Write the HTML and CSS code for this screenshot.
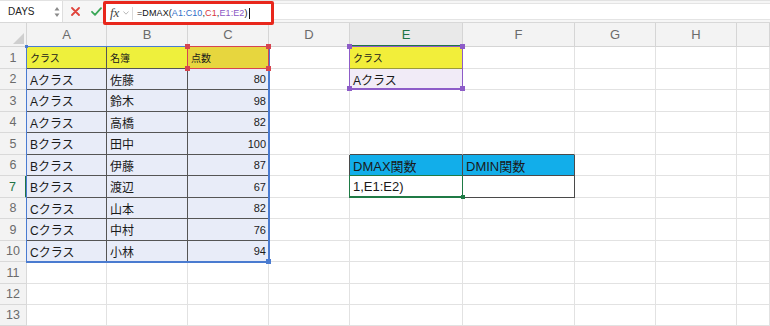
FILE: index.html
```html
<!DOCTYPE html>
<html lang="ja">
<head>
    <meta charset="UTF-8">
    <title>DMAX</title>
    <link rel="stylesheet" href="styles.css">
</head>
<body>
    <div class="toolbar">
        <div class="namebox">
            <span class="namebox-text">DAYS</span>
            <svg class="spin" width="6" height="12" viewBox="0 0 6 12">
                <path d="M3 1 L5.5 4.5 L0.5 4.5 Z" fill="#8a8a8a"/>
                <path d="M3 11 L5.5 7.5 L0.5 7.5 Z" fill="#8a8a8a"/>
            </svg>
        </div>
        <div class="tb-icons">
            <svg class="cancel" width="9" height="9" viewBox="0 0 9 9">
                <path d="M1 1 L8 8 M8 1 L1 8" stroke="#e0443c" stroke-width="1.8" stroke-linecap="round"/>
            </svg>
            <svg class="ok" width="11" height="9" viewBox="0 0 11 9">
                <path d="M1 4.8 L4 7.8 L10 1.2" stroke="#3aa757" stroke-width="1.8" fill="none" stroke-linecap="round" stroke-linejoin="round"/>
            </svg>
        </div>
        <div class="fx-box">
            <span class="fx">fx</span>
            <svg class="fx-caret" width="6" height="4" viewBox="0 0 6 4">
                <path d="M0.5 0.5 L3 3.2 L5.5 0.5" stroke="#b0b0b0" stroke-width="0.9" fill="none"/>
            </svg>
            <span class="fx-divider"></span>
            <div class="formula">=DMAX(<span class="ref-a">A1:C10</span>,<span class="ref-c">C1</span>,<span class="ref-e">E1:E2</span>)<span class="cursor"></span></div>
        </div>
        <div class="formula-rest"></div>
    </div>

    <div class="sheet-wrap">
        <div class="sheet" id="sheet"></div>
        <div class="sheet overlay">
            <div class="hl hl-blue"><span class="h h-tl"></span><span class="h h-br"></span></div>
            <div class="hl hl-red"><span class="h h-tl"></span><span class="h h-tr"></span><span class="h h-bl"></span><span class="h h-br"></span></div>
            <div class="hl hl-purple"><span class="h h-tl"></span><span class="h h-tr"></span><span class="h h-bl"></span><span class="h h-br"></span></div>
            <div class="hl hl-green"><span class="h h-br"></span></div>
        </div>
    </div>

    <script>
    // sheet contents
    const cols = ['A','B','C','D','E','F','G','H',''];
    const data = {
        1: {A:'クラス', B:'名簿', C:'点数', E:'クラス'},
        2: {A:'Aクラス', B:'佐藤', C:80, E:'Aクラス'},
        3: {A:'Aクラス', B:'鈴木', C:98},
        4: {A:'Aクラス', B:'高橋', C:82},
        5: {A:'Bクラス', B:'田中', C:100},
        6: {A:'Bクラス', B:'伊藤', C:87, E:'DMAX関数', F:'DMIN関数'},
        7: {A:'Bクラス', B:'渡辺', C:67, E:'1,E1:E2)'},
        8: {A:'Cクラス', B:'山本', C:82},
        9: {A:'Cクラス', B:'中村', C:76},
        10: {A:'Cクラス', B:'小林', C:94}
    };
    const activeRow = 7, activeCol = 'E';

    function cellClass(r, c) {
        const cls = ['cell'];
        const inTable = r <= 10 && c && 'ABC'.includes(c);
        if (inTable) {
            cls.push('tbl-line');
            if (r === 1) cls.push(c === 'C' ? 'yel-sel' : 'yel', 'small');
            else cls.push('tbl');
            if (c === 'C' && r > 1) cls.push('num');
        }
        if (c === 'E' && r === 1) cls.push('yel-e', 'small');
        if (c === 'E' && r === 2) cls.push('lav');
        if ((c === 'E' || c === 'F') && r === 6) cls.push('cyan', 'box', 'large');
        if ((c === 'E' || c === 'F') && r === 7) cls.push('box', 'large');
        if (c === 'D' && (r === 6 || r === 7)) cls.push('r-dark');
        if ((c === 'E' || c === 'F') && r === 5) cls.push('b-dark');
        return cls.join(' ');
    }

    const sheet = document.getElementById('sheet');
    const corner = document.createElement('div');
    corner.className = 'cell corner';
    sheet.appendChild(corner);
    cols.forEach(c => {
        const h = document.createElement('div');
        h.className = 'cell col-head' + (c === activeCol ? ' active' : '');
        h.textContent = c;
        sheet.appendChild(h);
    });
    for (let r = 1; r <= 13; r++) {
        const rh = document.createElement('div');
        rh.className = 'cell row-head' + (r === activeRow ? ' active' : '');
        rh.textContent = r;
        sheet.appendChild(rh);
        cols.forEach(c => {
            const cell = document.createElement('div');
            cell.className = cellClass(r, c);
            const v = data[r] && data[r][c];
            if (v !== undefined) cell.textContent = v;
            sheet.appendChild(cell);
        });
    }
    </script>
</body>
</html>
```

FILE: styles.css
```css
body {
    margin: 0;
    width: 770px;
    height: 326px;
    overflow: hidden;
    background: #fff;
    font-family: "Liberation Sans", "Noto Sans CJK JP", sans-serif;
    color: #1a1a1a;
}
.toolbar {
    display: flex;
    align-items: center;
    height: 23px;
    box-sizing: border-box;
    background: #f6f6f6;
    border-top: 1px solid #e2e2e2;
    border-bottom: 1px solid #d8d8d8;
    position: relative;
    z-index: 3;
}
.namebox {
    width: 63px;
    height: 100%;
    box-sizing: border-box;
    background: #fff;
    border-right: 1px solid #dedede;
    display: flex;
    align-items: center;
    padding-left: 8px;
    font-size: 10px;
    color: #222;
}
.spin {
    margin-left: auto;
    margin-right: 2px;
}
.tb-icons {
    width: 40px;
    display: flex;
    align-items: center;
    padding-left: 8px;
    gap: 11px;
    box-sizing: border-box;
}
.fx-box {
    width: 171px;
    height: 24px;
    align-self: flex-start;
    box-sizing: border-box;
    border: 3px solid #e8271c;
    border-radius: 2px;
    background: #fff;
    display: flex;
    align-items: center;
    padding-left: 4px;
}
.fx {
    font-family: "Liberation Serif", serif;
    font-style: italic;
    font-size: 13px;
    color: #444;
    width: 13px;
}
.fx-divider {
    width: 1px;
    height: 13px;
    background: #dadada;
    margin: 0 4px 0 3px;
}
.formula {
    font-size: 9px;
    color: #111;
    display: flex;
    align-items: center;
    letter-spacing: 0.1px;
}
.ref-a { color: #2f6fc9; }
.ref-c { color: #d9363e; }
.ref-e { color: #8b57c4; }
.cursor {
    width: 1px;
    height: 11px;
    background: #111;
    margin-left: 1px;
}
.formula-rest {
    flex: 1;
    height: 15px;
    background: #fff;
    border-top: 1px solid #e4e4e4;
    border-bottom: 1px solid #e4e4e4;
}

.sheet-wrap {
    position: relative;
}
.sheet {
    display: grid;
    grid-template-columns: 27px 80px 81px 81px 81px 113px 112px 81px 81px 1fr;
    grid-template-rows: 24px 22px 21px 22px 21px 22px 21px 22px 21px 22px 21px 22px 21px 21px;
}
.overlay {
    position: absolute;
    top: 0;
    left: 0;
    right: 0;
    pointer-events: none;
}
.cell {
    box-sizing: border-box;
    border-right: 1px solid #e2e2e2;
    border-bottom: 1px solid #e2e2e2;
    display: flex;
    align-items: center;
    padding: 0 3px;
    font-size: 12px;
    white-space: nowrap;
    overflow: hidden;
}
.corner {
    background: #f3f3f3;
    border-color: #d5d5d5;
    position: relative;
}
.corner::after {
    content: "";
    position: absolute;
    right: 2px;
    bottom: 2px;
    width: 11px;
    height: 11px;
    background: #cfcfcf;
    clip-path: polygon(100% 0, 100% 100%, 0 100%);
}
.col-head {
    background: #f3f3f3;
    border-color: #d5d5d5;
    justify-content: center;
    color: #6b6b6b;
    font-size: 13px;
}
.col-head.active {
    background: #e9e9e9;
    color: #217346;
    border-bottom: 2px solid #217346;
}
.row-head {
    background: #f3f3f3;
    border-color: #d9d9d9;
    justify-content: center;
    color: #6b6b6b;
    font-size: 12.5px;
    padding: 0;
}
.row-head.active {
    color: #217346;
    border-right: 2px solid #217346;
}
.tbl-line {
    border-right-color: #555;
    border-bottom-color: #555;
}
.tbl { background: #e8ecf8; }
.yel { background: #eef03c; }
.yel-sel { background: #e7d63e; }
.yel-e {
    background: #f2ee3a;
    border-bottom-color: #9b9b3a;
}
.lav { background: #f1ebf7; }
.small { font-size: 10px; }
.large { font-size: 13px; }
.num {
    justify-content: flex-end;
    padding-right: 2px;
    font-size: 11px;
}
.cyan { background: #12aeea; }
.box {
    border-right-color: #4a4a4a;
    border-bottom-color: #4a4a4a;
}
.r-dark { border-right-color: #4a4a4a; }
.b-dark { border-bottom-color: #4a4a4a; }

.hl {
    position: relative;
    box-sizing: border-box;
    margin: -1px 0 0 -1px;
    border: 1px solid transparent;
}
.hl-blue {
    grid-column: 2 / 5;
    grid-row: 2 / 12;
    border-color: #4a7bd0;
    border-right-width: 2px;
    border-bottom-width: 2px;
    margin-right: -1px;
    margin-bottom: -1px;
}
.hl-red {
    grid-column: 4 / 5;
    grid-row: 2 / 3;
    border-color: #d64550;
}
.hl-purple {
    grid-column: 6 / 7;
    grid-row: 2 / 4;
    border-color: #8d5cc8;
    border-bottom-width: 2px;
}
.hl-green {
    grid-column: 6 / 7;
    grid-row: 8 / 9;
    border-color: #1f7a45;
    border-bottom-width: 2px;
}
.h {
    position: absolute;
    width: 5px;
    height: 5px;
}
.h-tl { top: -3px; left: -3px; }
.h-tr { top: -3px; right: -3px; }
.h-bl { bottom: -3px; left: -3px; }
.h-br { bottom: -3px; right: -3px; }
.hl-blue .h { background: #4a7bd0; }
.hl-blue .h-tl { width: 3px; height: 3px; top: -2px; left: -2px; }
.hl-red .h { background: #d64550; }
.hl-purple .h { background: #8d5cc8; }
.hl-green .h { background: #1f7a45; width: 4px; height: 4px; }
```
